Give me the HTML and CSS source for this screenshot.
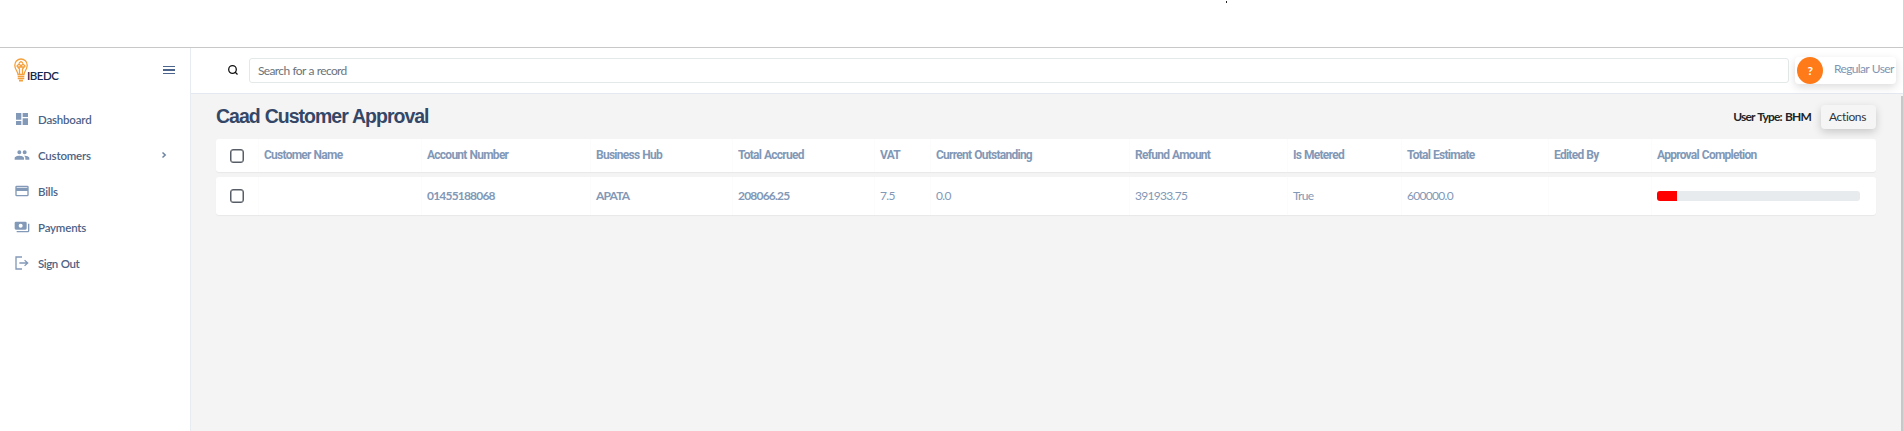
FILE: index.html
```html
<!DOCTYPE html>
<html lang="en">
<head>
<meta charset="utf-8">
<title>Caad Customer Approval</title>
<link rel="stylesheet" href="styles.css">
</head>
<body>
<div class="top"><span class="dot"></span></div>
<div class="app">
  <aside class="sidebar">
    <div class="brand">
      <div class="logo">
        <svg width="14" height="24" viewBox="0 0 14 24" fill="none" stroke="#f3a13c" stroke-width="1.3"><path d="M4 16.5c0-3-3.2-5-3.2-9.300a6.200 6.200 0 0 1 12.400 0c0 4.300-3.200 6.300-3.200 9.300z"/><path d="M5.500 16V11L3 8l2-2 2 2 2-2 2 2-2.500 3v5M5 5l2-1.500L9 5M4 9h6"/><path d="M3.700 18.500h6.600M3.700 20.500h6.600M5 22.700h4" stroke-width="1.700"/></svg>
        <span class="logo-text">IBEDC</span>
      </div>
      <svg class="burger" width="12" height="8" viewBox="0 0 12 8" fill="#4a648c"><path d="M0 0h12v1H0zM0 3h12v2H0zM0 7h12v1H0z"/></svg>
    </div>
    <nav class="menu">
      <a class="item"><svg viewBox="0 0 24 24"><path d="M3 13h8V3H3v10zm0 8h8v-6H3v6zm10 0h8V11h-8v10zm0-18v6h8V3h-8z"/></svg>Dashboard</a>
      <a class="item"><svg viewBox="0 0 24 24"><path d="M16 11a3 3 0 1 0 0-6 3 3 0 0 0 0 6zm-8 0a3 3 0 1 0 0-6 3 3 0 0 0 0 6zm0 2c-2.330 0-7 1.170-7 3.500V19h14v-2.500c0-2.330-4.670-3.500-7-3.500zm8 0c-.29 0-.62.020-.97.050 1.160.84 1.970 1.970 1.970 3.450V19h6v-2.500c0-2.330-4.670-3.500-7-3.500z"/></svg>Customers<svg class="chev" viewBox="0 0 6 8"><path d="M1.500 1.500 4.200 4 1.500 6.500"/></svg></a>
      <a class="item"><svg viewBox="0 0 24 24"><path d="M20 4H4a2 2 0 0 0-2 2v12a2 2 0 0 0 2 2h16a2 2 0 0 0 2-2V6a2 2 0 0 0-2-2zm0 14H4v-6h16v6zm0-10H4V6h16v2z"/><path d="M3 7h18v5H3z"/></svg>Bills</a>
      <a class="item"><svg viewBox="0 0 24 24"><path d="M19 14V6a2 2 0 0 0-2-2H3a2 2 0 0 0-2 2v8a2 2 0 0 0 2 2h14a2 2 0 0 0 2-2zm-9-1a3 3 0 1 1 0-6 3 3 0 0 1 0 6zm13-6v11a2 2 0 0 1-2 2H4v-2h17V7h2z"/></svg>Payments</a>
      <a class="item"><svg viewBox="0 0 24 24"><path d="M12 2v2H4v16h8v2H2V2zM16.500 7l5.500 5-5.500 5-1.300-1.300 2.600-2.700H8v-2h9.800l-2.600-2.700z"/></svg>Sign Out</a>
    </nav>
  </aside>
  <main class="main">
    <header class="header">
      <svg class="search-icon" width="10" height="10" viewBox="0 0 10 10" fill="none" stroke="#111" stroke-width="1.300"><circle cx="4.500" cy="4.500" r="3.800"/><path d="M7 7l2.500 2.500"/></svg>
      <div class="search">Search for a record</div>
      <div class="user"><span class="avatar">?</span><span class="user-name">Regular User</span></div>
    </header>
    <section class="content">
      <div class="title-row">
        <h1 class="title">Caad Customer Approval</h1>
        <span class="user-type">User Type: BHM</span>
        <button class="actions">Actions</button>
      </div>
      <div class="row head">
        <div class="cell"><span class="check"></span></div><div class="cell">Customer Name</div><div class="cell">Account Number</div><div class="cell">Business Hub</div><div class="cell">Total Accrued</div><div class="cell">VAT</div><div class="cell">Current Outstanding</div><div class="cell">Refund Amount</div><div class="cell">Is Metered</div><div class="cell">Total Estimate</div><div class="cell">Edited By</div><div class="cell">Approval Completion</div>
      </div>
      <div class="row data">
        <div class="cell"><span class="check"></span></div><div class="cell"></div><div class="cell strong">01455188068</div><div class="cell strong">APATA</div><div class="cell strong">208066.25</div><div class="cell">7.5</div><div class="cell">0.0</div><div class="cell">391933.75</div><div class="cell">True</div><div class="cell">600000.0</div><div class="cell"></div><div class="cell bar-cell"><div class="progress"><div class="bar"></div></div></div>
      </div>
      <div class="scrollbar"></div>
    </section>
  </main>
</div>
</body>
</html>
```
FILE: styles.css
```css
* { box-sizing: border-box; }
body { margin: 0; height: 431px; overflow: hidden; background: #fff; font-family: Lato, sans-serif; font-size: 12px; letter-spacing: -.65px; word-spacing: .6px; display: flex; flex-direction: column; }
.top { height: 48px; flex: none; border-bottom: 1px solid #c8c8c8; padding-left: 1226px; }
.dot { display: block; width: 1px; height: 2px; margin-top: 1px; background: #222; }
.app { flex: 1; display: flex; min-height: 0; }
.sidebar { width: 191px; border-right: 1px solid #e6ecf2; flex: none; }
.brand { height: 53px; padding: 10px 15px 0 14px; display: flex; justify-content: space-between; }
.logo { display: flex; height: 24px; }
.logo-text { font-weight: 600; font-size: 11.500px; line-height: 14px; color: #14284f; margin: 11px 0 0 -1px; letter-spacing: -.5px; }
.burger { margin: 8px 0 0; }
.menu { display: flex; flex-direction: column; }
.item { height: 36px; display: flex; align-items: center; padding: 0 23px 0 14px; gap: 8px; font-weight: 600; font-size: 11.500px; letter-spacing: -.2px; color: #4d6386; }
.item:last-child { letter-spacing: -.45px; }
.item svg { width: 16px; height: 16px; fill: #8299b8; flex: none; }
.item .chev { width: 6px; height: 8px; margin-left: auto; fill: none; stroke: #6c84a4; stroke-width: 1.500; }
.main { flex: 1; display: flex; flex-direction: column; min-width: 0; }
.header { height: 46px; flex: none; border-bottom: 1px solid #e4e8f1; display: flex; align-items: flex-start; padding: 9px 7px 0 37px; }
.search-icon { margin: 8px 11px 0 0; }
.search { flex: 1; height: 25px; margin-top: 1px; border: 1px solid #e3e8e9; border-radius: 3px; padding: 0 8px; line-height: 24px; color: #6b737b; }
.user { flex: none; width: 101px; height: 27px; margin-left: 6px; border-radius: 4px; background: #fff; box-shadow: 0 3px 8px rgba(0,0,0,.14); display: flex; padding-left: 2px; }
.avatar { flex: none; width: 26px; height: 27px; border-radius: 50%; background: #ff7a18; color: #fff; font-weight: 700; text-align: center; line-height: 28px; margin-right: 11px; }
.user-name { color: #8195b3; line-height: 24px; white-space: nowrap; }
.content { position: relative; flex: 1; background: #f4f4f4; padding: 10px 27px 0 25px; }
.title-row { height: 35px; display: flex; align-items: flex-start; }
.title { margin: 0 auto 0 0; font: 700 19.500px/24px "Liberation Sans", sans-serif; color: #344767; letter-spacing: -1px; word-spacing: .6px; }
.user-type { line-height: 25px; color: #212529; font-weight: 700; letter-spacing: -.85px; word-spacing: 1.200px; margin-right: 10px; }
.actions { width: 55px; height: 24px; margin-top: 1px; padding: 0 2px 1px 0; border: 0; border-radius: 4px; background: #f5f5f5; box-shadow: 0 3px 8px rgba(0,0,0,.18); font: 12px Lato, sans-serif; letter-spacing: -.35px; color: #30353b; }
.row { display: grid; grid-template-columns: 42px 163px 169px 142px 142px 56px 199px 158px 114px 147px 103px 1fr; background: #fff; border-radius: 3px; box-shadow: 0 1px 1px rgba(0,0,0,.05); color: #8298b7; letter-spacing: -.7px; }
.head { height: 33px; font: 700 12px Roboto, sans-serif; letter-spacing: -.74px; margin-bottom: 5px; }
.data { height: 38px; }
.cell { display: flex; align-items: center; padding: 0 0 1px 5px; border-left: 1px solid #fcfcfc; white-space: nowrap; }
.cell:first-child { padding: 0 0 0 14px; border: 0; }
.bar-cell { padding-bottom: 0; }
.strong { font-weight: 700; letter-spacing: -.8px; }
.check { width: 14px; height: 14px; border: 1.500px solid #575d66; border-radius: 3px; box-shadow: inset 0 0 0 .5px #575d66; }
.progress { width: 203px; height: 10px; border-radius: 3px; background: #e8ebee; overflow: hidden; }
.bar { width: 20px; height: 10px; background: #f00; }
.scrollbar { position: absolute; right: 0; top: 2px; bottom: 0; width: 2px; background: #c8c8c8; }
```
